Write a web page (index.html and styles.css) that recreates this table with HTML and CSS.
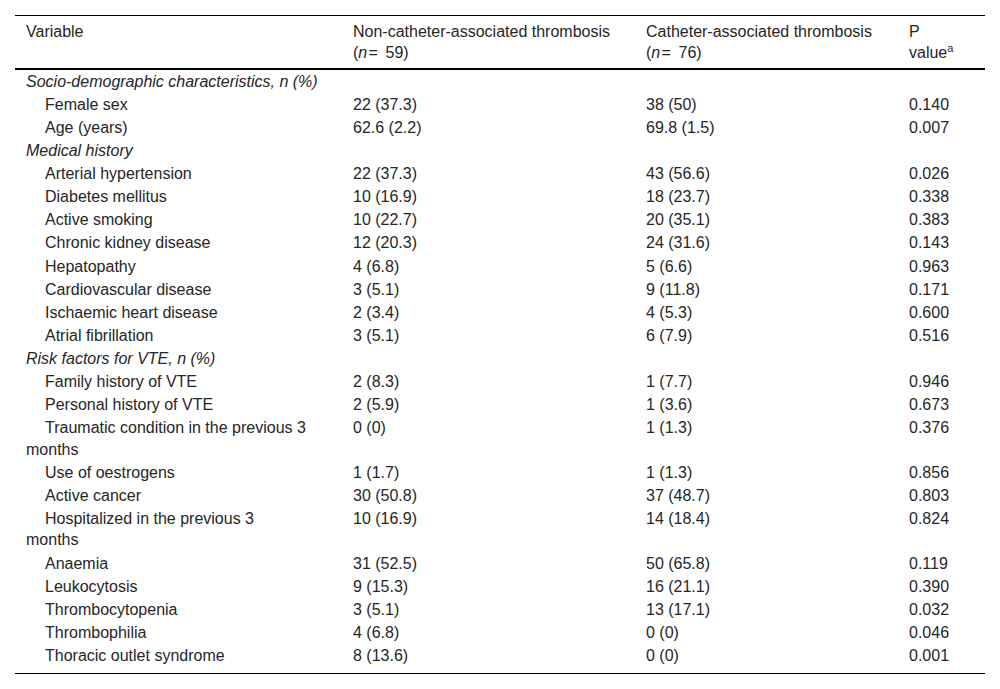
FILE: index.html
```html
<!DOCTYPE html>
<html lang="en">
<head>
<meta charset="utf-8">
<title>Table</title>
<link rel="stylesheet" href="styles.css">
</head>
<body>
<table class="data">
  <colgroup>
    <col class="c1"><col class="c2"><col class="c3"><col class="c4">
  </colgroup>
  <thead>
    <tr>
      <th>Variable</th>
      <th>Non-catheter-associated thrombosis<br>(<i>n</i>&#8202;=&#8201; 59)</th>
      <th>Catheter-associated thrombosis<br>(<i>n</i>&#8202;=&#8201; 76)</th>
      <th>P<br>value<sup>a</sup></th>
    </tr>
  </thead>
  <tbody>
    <tr class="group"><td colspan="4">Socio-demographic characteristics, n (%)</td></tr>
    <tr><td class="lbl">Female sex</td><td>22 (37.3)</td><td>38 (50)</td><td>0.140</td></tr>
    <tr><td class="lbl">Age (years)</td><td>62.6 (2.2)</td><td>69.8 (1.5)</td><td>0.007</td></tr>
    <tr class="group"><td colspan="4">Medical history</td></tr>
    <tr><td class="lbl">Arterial hypertension</td><td>22 (37.3)</td><td>43 (56.6)</td><td>0.026</td></tr>
    <tr><td class="lbl">Diabetes mellitus</td><td>10 (16.9)</td><td>18 (23.7)</td><td>0.338</td></tr>
    <tr><td class="lbl">Active smoking</td><td>10 (22.7)</td><td>20 (35.1)</td><td>0.383</td></tr>
    <tr><td class="lbl">Chronic kidney disease</td><td>12 (20.3)</td><td>24 (31.6)</td><td>0.143</td></tr>
    <tr><td class="lbl">Hepatopathy</td><td>4 (6.8)</td><td>5 (6.6)</td><td>0.963</td></tr>
    <tr><td class="lbl">Cardiovascular disease</td><td>3 (5.1)</td><td>9 (11.8)</td><td>0.171</td></tr>
    <tr><td class="lbl">Ischaemic heart disease</td><td>2 (3.4)</td><td>4 (5.3)</td><td>0.600</td></tr>
    <tr><td class="lbl">Atrial fibrillation</td><td>3 (5.1)</td><td>6 (7.9)</td><td>0.516</td></tr>
    <tr class="group"><td colspan="4">Risk factors for VTE, n (%)</td></tr>
    <tr><td class="lbl">Family history of VTE</td><td>2 (8.3)</td><td>1 (7.7)</td><td>0.946</td></tr>
    <tr><td class="lbl">Personal history of VTE</td><td>2 (5.9)</td><td>1 (3.6)</td><td>0.673</td></tr>
    <tr><td class="lbl">Traumatic condition in the previous 3 months</td><td>0 (0)</td><td>1 (1.3)</td><td>0.376</td></tr>
    <tr><td class="lbl">Use of oestrogens</td><td>1 (1.7)</td><td>1 (1.3)</td><td>0.856</td></tr>
    <tr><td class="lbl">Active cancer</td><td>30 (50.8)</td><td>37 (48.7)</td><td>0.803</td></tr>
    <tr><td class="lbl">Hospitalized in the previous 3 months</td><td>10 (16.9)</td><td>14 (18.4)</td><td>0.824</td></tr>
    <tr><td class="lbl">Anaemia</td><td>31 (52.5)</td><td>50 (65.8)</td><td>0.119</td></tr>
    <tr><td class="lbl">Leukocytosis</td><td>9 (15.3)</td><td>16 (21.1)</td><td>0.390</td></tr>
    <tr><td class="lbl">Thrombocytopenia</td><td>3 (5.1)</td><td>13 (17.1)</td><td>0.032</td></tr>
    <tr><td class="lbl">Thrombophilia</td><td>4 (6.8)</td><td>0 (0)</td><td>0.046</td></tr>
    <tr class="last"><td class="lbl">Thoracic outlet syndrome</td><td>8 (13.6)</td><td>0 (0)</td><td>0.001</td></tr>
  </tbody>
</table>
</body>
</html>
```

FILE: styles.css
```css
html, body {
  margin: 0;
  padding: 0;
  background: #ffffff;
}

body {
  padding: 15px 15px 0 15px;
  font-family: "Liberation Sans", Arial, sans-serif;
  font-size: 16px;
  color: #262626;
}

.data {
  width: 970px;
  table-layout: fixed;
  border-collapse: separate;
  border-spacing: 0;
  border-top: 1px solid #000;
  border-bottom: 1px solid #000;
}

.c1 { width: 327px; }
.c2 { width: 293px; }
.c3 { width: 263px; }
.c4 { width: 87px; }

.data th,
.data td {
  text-align: left;
  vertical-align: top;
  line-height: 21.3px;
  padding: 0.95px 20px 0.9px 11px;
  font-weight: normal;
}

.data th {
  padding-top: 5px;
  padding-bottom: 4px;
  border-bottom: 2px solid #000;
}

.data sup {
  font-size: 11px;
  line-height: 0;
  vertical-align: 6px;
}

.data td.lbl {
  text-indent: 19px;
  padding-right: 33.5px;
}

.group td {
  font-style: italic;
}

.last td {
  padding-bottom: 6.5px;
}
```
